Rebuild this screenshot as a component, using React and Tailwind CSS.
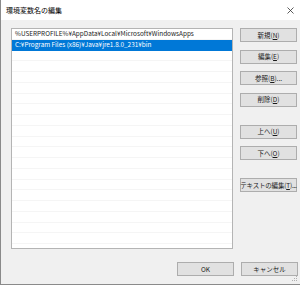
const Btn = ({ children, className = '' }) => (
  <div
    className={`h-[14px] w-[57px] flex items-center justify-center whitespace-nowrap bg-[#e1e1e1] border border-[#adadad] text-[6.5px] leading-none text-[#1a1a1a] ${className}`}
  >
    {children}
  </div>
);

const App = () => {
  const rows = Array.from({ length: 21 });
  return (
    <div
      className="w-[300px] h-[285px] bg-[#f0f0f0] border-l border-b border-[#8a8a8a] flex flex-col relative overflow-hidden"
      style={{ fontFamily: '"Noto Sans CJK JP", "Noto Sans", sans-serif' }}
    >
      {/* Title bar */}
      <div className="h-[20px] bg-white flex items-center justify-between pl-[5px] pr-[5px] shrink-0">
        <span className="text-[7px] leading-none text-black">環境変数名の編集</span>
        <svg width="7" height="7" viewBox="0 0 7 7" className="mr-[1px]">
          <path d="M0.5 0.5 L6.5 6.5 M6.5 0.5 L0.5 6.5" stroke="#333" strokeWidth="0.8" />
        </svg>
      </div>

      {/* Body */}
      <div className="flex pl-[10px] pt-[8px]">
        {/* List */}
        <div className="w-[222px] h-[221px] bg-white border border-[#b4b4b4] overflow-hidden">
          {rows.map((_, i) => (
            <div
              key={i}
              className={`h-[10.75px] flex items-center pl-[3px] text-[6.4px] leading-none whitespace-nowrap ${
                i === 1 ? 'bg-[#0078d7] text-white' : 'text-[#222] border-b border-[#f5f5f5]'
              }`}
            >
              {i === 0 && '%USERPROFILE%¥AppData¥Local¥Microsoft¥WindowsApps'}
              {i === 1 && 'C:¥Program Files (x86)¥Java¥jre1.8.0_231¥bin'}
            </div>
          ))}
        </div>

        {/* Buttons */}
        <div className="ml-[7px] flex flex-col">
          <Btn>新規(<u>N</u>)</Btn>
          <Btn className="mt-[7.5px]">編集(<u>E</u>)</Btn>
          <Btn className="mt-[7.5px]">参照(<u>B</u>)...</Btn>
          <Btn className="mt-[7.5px]">削除(<u>D</u>)</Btn>
          <Btn className="mt-[18px]">上へ(<u>U</u>)</Btn>
          <Btn className="mt-[7.5px]">下へ(<u>O</u>)</Btn>
          <Btn className="mt-[18px] tracking-[-0.2px]">テキストの編集(<u>T</u>)...</Btn>
        </div>
      </div>

      {/* Footer */}
      <div className="flex pl-[176px] pt-[13px] gap-[7px]">
        <Btn className="w-[56px] border-[#0078d7]">OK</Btn>
        <Btn>キャンセル</Btn>
      </div>

      {/* Resize grip */}
      <svg width="6" height="6" viewBox="0 0 6 6" className="absolute right-[2px] bottom-[2px]">
        <rect x="4" y="0" width="1" height="1" fill="#b0b0b0" />
        <rect x="2" y="2" width="1" height="1" fill="#b0b0b0" />
        <rect x="4" y="2" width="1" height="1" fill="#b0b0b0" />
        <rect x="0" y="4" width="1" height="1" fill="#b0b0b0" />
        <rect x="2" y="4" width="1" height="1" fill="#b0b0b0" />
        <rect x="4" y="4" width="1" height="1" fill="#b0b0b0" />
      </svg>
    </div>
  );
};

export default App;
